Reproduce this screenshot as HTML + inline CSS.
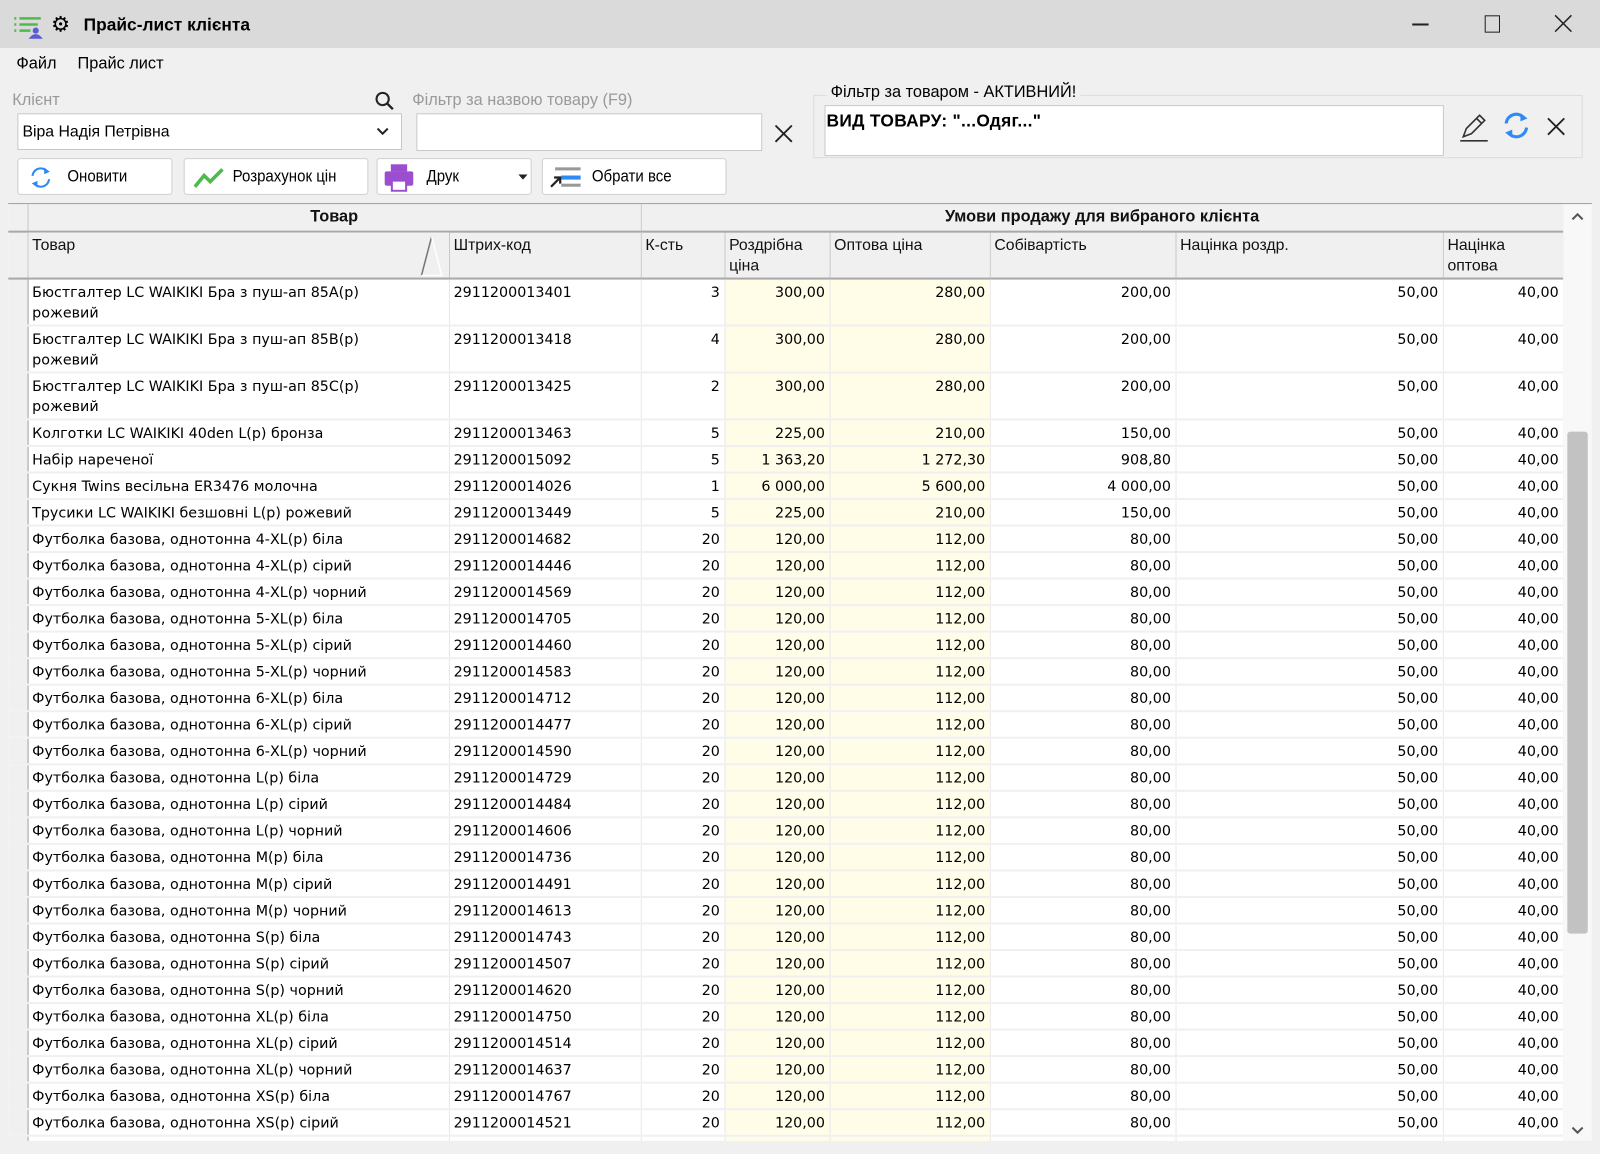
<!DOCTYPE html>
<html><head><meta charset="utf-8"><style>
html,body{margin:0;padding:0;width:1600px;height:1154px;overflow:hidden;background:#f0f0f0;}
#w{position:absolute;left:0;top:0;width:1568px;height:1131px;transform:scale(1.020408);transform-origin:0 0;font-family:"DejaVu Sans","Liberation Sans",sans-serif;font-size:14px;color:#000;background:#f0f0f0;}
.abs{position:absolute;}
#title{left:0;top:0;width:1568px;height:47px;background:#dadada;}
.btn{position:absolute;top:155px;height:36px;background:#fff;border:1px solid #cfcfcf;border-radius:3px;box-sizing:border-box;}
.btn span{position:absolute;top:9px;font-family:"Liberation Sans",sans-serif;font-size:16px;transform:scaleX(.92);transform-origin:0 0;}
.lbl{font-family:"Liberation Sans",sans-serif;font-size:16px;}
#grid{left:8px;top:200px;width:1524px;height:918px;overflow:hidden;background:#fff;}
table{border-collapse:collapse;table-layout:fixed;width:1524px;}
tr{height:26px;}
td{padding:0 4px;vertical-align:top;border-right:1px solid #e8e8e8;border-bottom:2px solid #f0f0f0;height:26px;line-height:20px;white-space:nowrap;overflow:hidden;padding-top:3px;box-sizing:border-box;}
td.n{text-align:right;}
td.y{background:#fffde8;}
td.i{background:#f0f0f0;border-right:1px solid #a0a0a0;padding:0;}
tr.t{height:46px;} tr.t td{height:46px;}
tr.h td{background:#f0f0f0;border-right:1px solid #c8c8c8;border-bottom:2px solid #a8a8a8;font-family:"Liberation Sans",sans-serif;font-size:15.5px;color:#111;}
tr.b{height:27px;} tr.b td{height:27px;text-align:center;font-weight:bold;padding-top:3px;}
tr.c{height:46px;} tr.c td{height:46px;line-height:20px;white-space:normal;}
#sb{left:1532px;top:200px;width:28px;height:918px;background:#f8f8f8;}
</style></head><body><div id="w">
<div class="abs" id="title"></div>
<svg class="abs" style="left:12px;top:14px" width="32" height="26" viewBox="0 0 32 26"><g stroke="#4cbb4c" stroke-width="2.5"><line x1="2" y1="4" x2="4" y2="4"/><line x1="7" y1="4" x2="28" y2="4"/><line x1="2" y1="10" x2="4" y2="10"/><line x1="7" y1="10" x2="25" y2="10"/><line x1="2" y1="16" x2="4" y2="16"/><line x1="7" y1="16" x2="18" y2="16"/></g><circle cx="23" cy="16" r="3" fill="#5b5bd6"/><path d="M16 24 Q23 15 30 24Z" fill="#5b5bd6"/></svg>
<div class="abs" style="left:50px;top:13px;font-size:21px;line-height:22px;font-weight:bold">⚙</div>
<div class="abs" style="left:82px;top:15px;font-family:'Liberation Sans',sans-serif;font-weight:bold;font-size:17px;">Прайс-лист клієнта</div>
<div class="abs" style="left:1384px;top:23px;width:16px;height:1.5px;background:#222"></div>
<div class="abs" style="left:1455px;top:15px;width:13px;height:15px;border:1.5px solid #222"></div>
<svg class="abs" style="left:1523px;top:14px" width="18" height="18"><path d="M1 1L17 17M17 1L1 17" stroke="#222" stroke-width="1.5"/></svg>
<div class="abs lbl" style="left:16px;top:54px;">Файл</div>
<div class="abs lbl" style="left:76px;top:54px;">Прайс лист</div>
<div class="abs lbl" style="left:12px;top:90px;color:#9a9a9a;">Клієнт</div>
<svg class="abs" style="left:367px;top:89px" width="20" height="20"><circle cx="8" cy="8" r="6" stroke="#222" stroke-width="2" fill="none"/><path d="M12.5 12.5L18 18" stroke="#222" stroke-width="2.4"/></svg>
<div class="abs lbl" style="left:404px;top:90px;color:#9a9a9a;">Фільтр за назвою товару (F9)</div>
<div class="abs" style="left:17px;top:111px;width:377px;height:36px;background:#fff;border:1px solid #c8c8c8;box-sizing:border-box"></div>
<div class="abs lbl" style="left:22px;top:121px;font-size:15.5px">Віра Надія Петрівна</div>
<svg class="abs" style="left:368px;top:124px" width="14" height="10"><path d="M2 2L7 7L12 2" stroke="#222" stroke-width="2" fill="none"/></svg>
<div class="abs" style="left:408px;top:111px;width:339px;height:37px;background:#fff;border:1px solid #c8c8c8;box-sizing:border-box"></div>
<svg class="abs" style="left:759px;top:122px" width="18" height="18"><path d="M1 1L17 17M17 1L1 17" stroke="#222" stroke-width="1.8"/></svg>
<div class="abs" style="left:797px;top:93px;width:754px;height:62px;border:1px solid #dcdcdc;box-sizing:border-box"></div>
<div class="abs" style="left:810px;top:82px;background:#f0f0f0;padding:0 4px;font-family:'Liberation Sans',sans-serif;font-size:16px;">Фільтр за товаром - АКТИВНИЙ!</div>
<div class="abs" style="left:808px;top:103px;width:607px;height:50px;background:#fff;border:1px solid #c8c8c8;box-sizing:border-box"></div>
<div class="abs" style="left:810px;top:109px;font-family:'Liberation Sans',sans-serif;font-weight:bold;font-size:17px;letter-spacing:.3px">ВИД ТОВАРУ: "...Одяг..."</div>
<svg class="abs" style="left:1428px;top:108px" width="32" height="32"><path d="M6 26L9 18L22 5L27 10L14 23Z M19 8L24 13" stroke="#333" stroke-width="1.6" fill="none"/><path d="M3 30H30" stroke="#333" stroke-width="1.6"/></svg>
<svg class="abs" style="left:1470px;top:107px" width="32" height="32" viewBox="0 0 32 32"><path d="M6 14A10 10 0 0 1 24 9M26 18A10 10 0 0 1 8 23" stroke="#2f8af5" stroke-width="3" fill="none"/><path d="M20 4L27 9L20 12Z M12 20L5 23L12 28Z" fill="#2f8af5"/></svg>
<svg class="abs" style="left:1516px;top:115px" width="18" height="18"><path d="M1 1L17 17M17 1L1 17" stroke="#222" stroke-width="1.8"/></svg>

<div class="btn" style="left:17px;width:152px"><svg class="abs" style="left:9px;top:5px" width="26" height="26" viewBox="0 0 32 32"><path d="M6 14A10 10 0 0 1 24 9M26 18A10 10 0 0 1 8 23" stroke="#2f8af5" stroke-width="2.5" fill="none"/><path d="M20 4L27 9L20 12Z M12 20L5 23L12 28Z" fill="#2f8af5"/></svg><span style="left:48px">Оновити</span></div>
<div class="btn" style="left:180px;width:181px"><svg class="abs" style="left:8px;top:7px" width="32" height="22"><path d="M2 20L11 9L17 15L29 3" stroke="#4cbb4c" stroke-width="3.5" fill="none"/></svg><span style="left:47px">Розрахунок цін</span></div>
<div class="btn" style="left:369px;width:152px"><svg class="abs" style="left:6px;top:4px" width="30" height="28"><rect x="7" y="1" width="16" height="7" fill="#9b4fd0"/><rect x="1" y="8" width="28" height="14" rx="2" fill="#9b4fd0"/><rect x="8" y="17" width="14" height="10" fill="#fff" stroke="#9b4fd0" stroke-width="2"/></svg><span style="left:48px">Друк</span><svg class="abs" style="left:138px;top:15px" width="10" height="6"><path d="M0 0H9L4.5 5Z" fill="#222"/></svg></div>
<div class="btn" style="left:531px;width:181px"><svg class="abs" style="left:6px;top:7px" width="32" height="22"><rect x="6" y="1" width="25" height="3" fill="#999"/><rect x="12" y="9" width="19" height="4" fill="#2f8af5"/><rect x="12" y="17" width="19" height="3" fill="#999"/><path d="M2 20L10 12M5 11H11V17" stroke="#222" stroke-width="2.2" fill="none"/></svg><span style="left:48px">Обрати все</span></div>

<div class="abs" id="grid"><table>
<colgroup><col style="width:19px"><col style="width:413px"><col style="width:188px"><col style="width:82px"><col style="width:103px"><col style="width:157px"><col style="width:182px"><col style="width:262px"><col style="width:118px"></colgroup>
<tr class="h b"><td class="i"></td><td colspan="2" style="font-size:16px">Товар</td><td colspan="6" style="font-size:16px">Умови продажу для вибраного клієнта</td></tr>
<tr class="h c"><td class="i"></td><td style="position:relative">Товар<svg style="position:absolute;left:383px;top:2px" width="26" height="42"><path d="M12 2L2 40" stroke="#777" stroke-width="1.5"/><path d="M12 2L22 40H2" stroke="#fff" stroke-width="1.5" fill="none"/></svg></td><td>Штрих-код</td><td>К-сть</td><td>Роздрібна ціна</td><td>Оптова ціна</td><td>Собівартість</td><td>Націнка роздр.</td><td>Націнка оптова</td></tr>
<tr class="t"><td class="i"></td><td>Бюстгалтер LC WAIKIKI Бра з пуш-ап 85A(р)<br>рожевий</td><td>2911200013401</td><td class="n">3</td><td class="n y">300,00</td><td class="n y">280,00</td><td class="n">200,00</td><td class="n">50,00</td><td class="n">40,00</td></tr>
<tr class="t"><td class="i"></td><td>Бюстгалтер LC WAIKIKI Бра з пуш-ап 85B(р)<br>рожевий</td><td>2911200013418</td><td class="n">4</td><td class="n y">300,00</td><td class="n y">280,00</td><td class="n">200,00</td><td class="n">50,00</td><td class="n">40,00</td></tr>
<tr class="t"><td class="i"></td><td>Бюстгалтер LC WAIKIKI Бра з пуш-ап 85C(р)<br>рожевий</td><td>2911200013425</td><td class="n">2</td><td class="n y">300,00</td><td class="n y">280,00</td><td class="n">200,00</td><td class="n">50,00</td><td class="n">40,00</td></tr>
<tr><td class="i"></td><td>Колготки LC WAIKIKI 40den L(р) бронза</td><td>2911200013463</td><td class="n">5</td><td class="n y">225,00</td><td class="n y">210,00</td><td class="n">150,00</td><td class="n">50,00</td><td class="n">40,00</td></tr>
<tr><td class="i"></td><td>Набір нареченої</td><td>2911200015092</td><td class="n">5</td><td class="n y">1 363,20</td><td class="n y">1 272,30</td><td class="n">908,80</td><td class="n">50,00</td><td class="n">40,00</td></tr>
<tr><td class="i"></td><td>Сукня Twins весільна ER3476 молочна</td><td>2911200014026</td><td class="n">1</td><td class="n y">6 000,00</td><td class="n y">5 600,00</td><td class="n">4 000,00</td><td class="n">50,00</td><td class="n">40,00</td></tr>
<tr><td class="i"></td><td>Трусики LC WAIKIKI безшовні L(р) рожевий</td><td>2911200013449</td><td class="n">5</td><td class="n y">225,00</td><td class="n y">210,00</td><td class="n">150,00</td><td class="n">50,00</td><td class="n">40,00</td></tr>
<tr><td class="i"></td><td>Футболка базова, однотонна 4-XL(р) біла</td><td>2911200014682</td><td class="n">20</td><td class="n y">120,00</td><td class="n y">112,00</td><td class="n">80,00</td><td class="n">50,00</td><td class="n">40,00</td></tr>
<tr><td class="i"></td><td>Футболка базова, однотонна 4-XL(р) сірий</td><td>2911200014446</td><td class="n">20</td><td class="n y">120,00</td><td class="n y">112,00</td><td class="n">80,00</td><td class="n">50,00</td><td class="n">40,00</td></tr>
<tr><td class="i"></td><td>Футболка базова, однотонна 4-XL(р) чорний</td><td>2911200014569</td><td class="n">20</td><td class="n y">120,00</td><td class="n y">112,00</td><td class="n">80,00</td><td class="n">50,00</td><td class="n">40,00</td></tr>
<tr><td class="i"></td><td>Футболка базова, однотонна 5-XL(р) біла</td><td>2911200014705</td><td class="n">20</td><td class="n y">120,00</td><td class="n y">112,00</td><td class="n">80,00</td><td class="n">50,00</td><td class="n">40,00</td></tr>
<tr><td class="i"></td><td>Футболка базова, однотонна 5-XL(р) сірий</td><td>2911200014460</td><td class="n">20</td><td class="n y">120,00</td><td class="n y">112,00</td><td class="n">80,00</td><td class="n">50,00</td><td class="n">40,00</td></tr>
<tr><td class="i"></td><td>Футболка базова, однотонна 5-XL(р) чорний</td><td>2911200014583</td><td class="n">20</td><td class="n y">120,00</td><td class="n y">112,00</td><td class="n">80,00</td><td class="n">50,00</td><td class="n">40,00</td></tr>
<tr><td class="i"></td><td>Футболка базова, однотонна 6-XL(р) біла</td><td>2911200014712</td><td class="n">20</td><td class="n y">120,00</td><td class="n y">112,00</td><td class="n">80,00</td><td class="n">50,00</td><td class="n">40,00</td></tr>
<tr><td class="i"></td><td>Футболка базова, однотонна 6-XL(р) сірий</td><td>2911200014477</td><td class="n">20</td><td class="n y">120,00</td><td class="n y">112,00</td><td class="n">80,00</td><td class="n">50,00</td><td class="n">40,00</td></tr>
<tr><td class="i"></td><td>Футболка базова, однотонна 6-XL(р) чорний</td><td>2911200014590</td><td class="n">20</td><td class="n y">120,00</td><td class="n y">112,00</td><td class="n">80,00</td><td class="n">50,00</td><td class="n">40,00</td></tr>
<tr><td class="i"></td><td>Футболка базова, однотонна L(р) біла</td><td>2911200014729</td><td class="n">20</td><td class="n y">120,00</td><td class="n y">112,00</td><td class="n">80,00</td><td class="n">50,00</td><td class="n">40,00</td></tr>
<tr><td class="i"></td><td>Футболка базова, однотонна L(р) сірий</td><td>2911200014484</td><td class="n">20</td><td class="n y">120,00</td><td class="n y">112,00</td><td class="n">80,00</td><td class="n">50,00</td><td class="n">40,00</td></tr>
<tr><td class="i"></td><td>Футболка базова, однотонна L(р) чорний</td><td>2911200014606</td><td class="n">20</td><td class="n y">120,00</td><td class="n y">112,00</td><td class="n">80,00</td><td class="n">50,00</td><td class="n">40,00</td></tr>
<tr><td class="i"></td><td>Футболка базова, однотонна M(р) біла</td><td>2911200014736</td><td class="n">20</td><td class="n y">120,00</td><td class="n y">112,00</td><td class="n">80,00</td><td class="n">50,00</td><td class="n">40,00</td></tr>
<tr><td class="i"></td><td>Футболка базова, однотонна M(р) сірий</td><td>2911200014491</td><td class="n">20</td><td class="n y">120,00</td><td class="n y">112,00</td><td class="n">80,00</td><td class="n">50,00</td><td class="n">40,00</td></tr>
<tr><td class="i"></td><td>Футболка базова, однотонна M(р) чорний</td><td>2911200014613</td><td class="n">20</td><td class="n y">120,00</td><td class="n y">112,00</td><td class="n">80,00</td><td class="n">50,00</td><td class="n">40,00</td></tr>
<tr><td class="i"></td><td>Футболка базова, однотонна S(р) біла</td><td>2911200014743</td><td class="n">20</td><td class="n y">120,00</td><td class="n y">112,00</td><td class="n">80,00</td><td class="n">50,00</td><td class="n">40,00</td></tr>
<tr><td class="i"></td><td>Футболка базова, однотонна S(р) сірий</td><td>2911200014507</td><td class="n">20</td><td class="n y">120,00</td><td class="n y">112,00</td><td class="n">80,00</td><td class="n">50,00</td><td class="n">40,00</td></tr>
<tr><td class="i"></td><td>Футболка базова, однотонна S(р) чорний</td><td>2911200014620</td><td class="n">20</td><td class="n y">120,00</td><td class="n y">112,00</td><td class="n">80,00</td><td class="n">50,00</td><td class="n">40,00</td></tr>
<tr><td class="i"></td><td>Футболка базова, однотонна XL(р) біла</td><td>2911200014750</td><td class="n">20</td><td class="n y">120,00</td><td class="n y">112,00</td><td class="n">80,00</td><td class="n">50,00</td><td class="n">40,00</td></tr>
<tr><td class="i"></td><td>Футболка базова, однотонна XL(р) сірий</td><td>2911200014514</td><td class="n">20</td><td class="n y">120,00</td><td class="n y">112,00</td><td class="n">80,00</td><td class="n">50,00</td><td class="n">40,00</td></tr>
<tr><td class="i"></td><td>Футболка базова, однотонна XL(р) чорний</td><td>2911200014637</td><td class="n">20</td><td class="n y">120,00</td><td class="n y">112,00</td><td class="n">80,00</td><td class="n">50,00</td><td class="n">40,00</td></tr>
<tr><td class="i"></td><td>Футболка базова, однотонна XS(р) біла</td><td>2911200014767</td><td class="n">20</td><td class="n y">120,00</td><td class="n y">112,00</td><td class="n">80,00</td><td class="n">50,00</td><td class="n">40,00</td></tr>
<tr><td class="i"></td><td>Футболка базова, однотонна XS(р) сірий</td><td>2911200014521</td><td class="n">20</td><td class="n y">120,00</td><td class="n y">112,00</td><td class="n">80,00</td><td class="n">50,00</td><td class="n">40,00</td></tr>
<tr><td class="i"></td><td>Футболка базова, однотонна XS(р) чорний</td><td>2911200014644</td><td class="n">20</td><td class="n y">120,00</td><td class="n y">112,00</td><td class="n">80,00</td><td class="n">50,00</td><td class="n">40,00</td></tr>
</table></div>
<div class="abs" id="sb"></div>
<div class="abs" style="left:1536px;top:423px;width:20px;height:492px;background:#c2c2c2;border-radius:3px"></div>
<svg class="abs" style="left:1539px;top:207px" width="14" height="10"><path d="M2 8L7 3L12 8" stroke="#555" stroke-width="2" fill="none"/></svg>
<svg class="abs" style="left:1539px;top:1103px" width="14" height="10"><path d="M2 2L7 7L12 2" stroke="#555" stroke-width="2" fill="none"/></svg>
<div class="abs" style="left:8px;top:199px;width:1552px;height:1px;background:#a0a0a0"></div>
</div></body></html>
